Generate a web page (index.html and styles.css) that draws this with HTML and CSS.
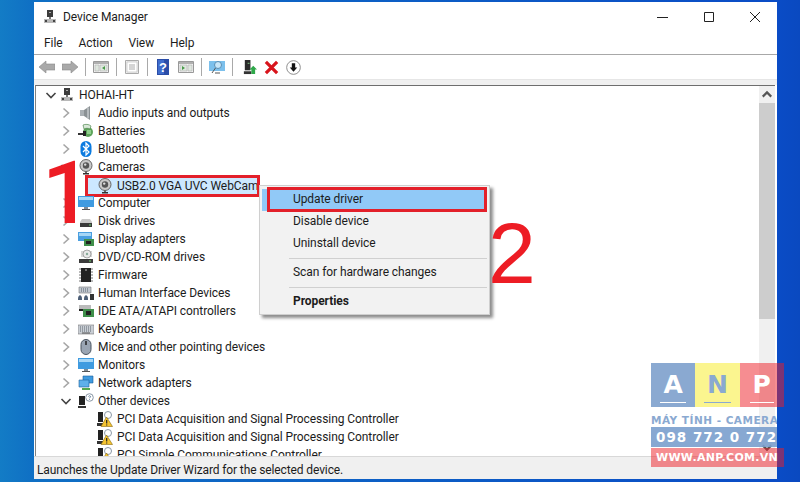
FILE: index.html
```html
<!DOCTYPE html>
<html lang="en">
<head>
<meta charset="utf-8">
<title>Device Manager</title>
<link rel="stylesheet" href="styles.css">
</head>
<body>
<svg class="defs" width="0" height="0" aria-hidden="true">
  <symbol id="chev-r" viewBox="0 0 16 16"><path d="M5.5 3.5 10.5 8 5.5 12.5" fill="none" stroke="#a6a6a6" stroke-width="1.6"/></symbol>
  <symbol id="chev-d" viewBox="0 0 16 16"><path d="M3.5 6 8 10.5 12.5 6" fill="none" stroke="#444" stroke-width="1.6"/></symbol>
  <symbol id="i-pc" viewBox="0 0 16 16"><path d="M5 1h6v7H5z" fill="#3c3c3c"/><path d="M7 3h2v1H7z" fill="#aaa"/><path d="M2 10h12v4H2z" fill="#b8b8b8"/><path d="M3 11h2v2H3zM11 11h2v2h-2z" fill="#444"/><path d="M7 8h2v2H7z" fill="#777"/></symbol>
  <symbol id="i-audio" viewBox="0 0 16 16"><path d="M2 5h4v6H2z" fill="#aab0b4"/><path d="M6 5 12 1v14L6 11z" fill="#8b9194"/><path d="M10 2.5v11" stroke="#c9cdd0" stroke-width="1.4"/></symbol>
  <symbol id="i-batt" viewBox="0 0 16 16"><ellipse cx="10" cy="9" rx="5" ry="5" fill="#5da35a"/><path d="M5 2c2-1 6-1 8 1l-1 3c-2-1-4-1-6 0z" fill="#d9e8d8" stroke="#3d7a3d" stroke-width=".6"/><path d="M0 10h6v2H0z" fill="#333"/><path d="M5 8h3v5H5z" fill="#222"/><path d="M9 7h4v4H9z" fill="#8fd08c"/></symbol>
  <symbol id="i-bt" viewBox="0 0 16 16"><rect x="2.5" y="0" width="11" height="16" rx="5.5" fill="#0b7be0"/><path d="M5 5l6 6-3 3V2l3 3-6 6" fill="none" stroke="#fff" stroke-width="1.2"/></symbol>
  <symbol id="i-cam" viewBox="0 0 16 16"><circle cx="8" cy="6.5" r="6" fill="#c9c9c9" stroke="#666"/><circle cx="8" cy="6.5" r="3.2" fill="#555"/><circle cx="7.2" cy="5.6" r="1.2" fill="#ddd"/><path d="M5 14h6v1.5H5z" fill="#333"/><path d="M7 12h2v2H7z" fill="#666"/></symbol>
  <symbol id="i-mon" viewBox="0 0 16 16"><path d="M0 1h16v11H0z" fill="#3f9be0"/><path d="M1 2h14v3H1z" fill="#a6d6f6"/><path d="M6 12h4v2H6z" fill="#7f8b95"/><path d="M4 14h8v1H4z" fill="#555"/></symbol>
  <symbol id="i-disk" viewBox="0 0 16 16"><path d="M2 9 4 6h8l2 3v4H2z" fill="#c8c8c8"/><path d="M2 10h12v4H2z" fill="#3a3a3a"/><path d="M11 11.500h2v1h-2z" fill="#6fd06f"/></symbol>
  <symbol id="i-disp" viewBox="0 0 16 16"><path d="M0 1h14v9H0z" fill="#4a9fe0"/><path d="M1 2h12v3H1z" fill="#a6d6f6"/><path d="M6 8h10v7H6z" fill="#3f8f4a"/><path d="M8 10h5v3H8z" fill="#222"/></symbol>
  <symbol id="i-dvd" viewBox="0 0 16 16"><path d="M3 8 3 2h11v6z" fill="#d5d5d5"/><circle cx="9" cy="5" r="4" fill="#e8e8e8" stroke="#888" stroke-width=".7"/><circle cx="9" cy="5" r="1.200" fill="#8a9"/><path d="M1 10h14v4H1z" fill="#3a3a3a"/><path d="M11 11.500h2v1h-2z" fill="#6fd06f"/></symbol>
  <symbol id="i-fw" viewBox="0 0 16 16"><path d="M3 1h10v14H3z" fill="#222"/><path d="M1 2h2M1 5h2M1 8h2M1 11h2M1 14h2M13 2h2M13 5h2M13 8h2M13 11h2M13 14h2" stroke="#777" stroke-width="1.200"/><circle cx="8" cy="3" r="1" fill="#888"/></symbol>
  <symbol id="i-hid" viewBox="0 0 16 16"><path d="M1 2h12v6H1z" fill="#c2c8d0" stroke="#777" stroke-width=".6"/><path d="M3 4h8M3 6h8" stroke="#55606a" stroke-dasharray="1 1"/><path d="M0 14c0-5 4-5 4 0v1H0zM6 14c0-5 4-5 4 0v1H6z" fill="#4d5f77"/><path d="M12 9h4v6h-4z" fill="#333"/></symbol>
  <symbol id="i-ide" viewBox="0 0 16 16"><path d="M1 2h12v4H1z" fill="#bbb"/><path d="M1 6h6v2H1z" fill="#222"/><path d="M5 6h11v8H5z" fill="#3f8f4a"/><path d="M8 8h5v4H8z" fill="#222"/></symbol>
  <symbol id="i-kbd" viewBox="0 0 16 16"><path d="M0 4h16v9H0z" fill="#c9ced4" stroke="#777" stroke-width=".6"/><path d="M2 6h12M2 8h12M2 10h12" stroke="#5c6670" stroke-dasharray="1 1"/><path d="M4 12h8" stroke="#555"/></symbol>
  <symbol id="i-mouse" viewBox="0 0 16 16"><rect x="3" y="0.500" width="10" height="15" rx="5" fill="#9aa5b3" stroke="#4a5460"/><path d="M8 2v4" stroke="#222" stroke-width="1.500"/></symbol>
  <symbol id="i-net" viewBox="0 0 16 16"><path d="M5 1h10v7H5z" fill="#3f9be0" stroke="#17609c" stroke-width=".6"/><path d="M1 5h10v7H1z" fill="#5fb0ea" stroke="#17609c" stroke-width=".6"/><path d="M4 13h8v2H4z" fill="#55a84f"/></symbol>
  <symbol id="i-other" viewBox="0 0 16 16"><path d="M1 3h6v9H1z" fill="#222"/><path d="M0 13h8v2H0z" fill="#333"/><circle cx="11.500" cy="4.500" r="3.800" fill="#fff" stroke="#8a97a5"/><path d="M10.500 3.500c.5-1.200 2.200-.8 2 .3-.1.700-1 .7-1 1.500M11.500 6.300v.7" stroke="#5f7d9a" fill="none"/></symbol>
  <symbol id="i-warn" viewBox="0 0 16 16"><path d="M1 1h5v10H1z" fill="#222"/><path d="M0 12h6v3H0z" fill="#333"/><circle cx="11" cy="4" r="3.500" fill="#fff" stroke="#8a97a5"/><path d="M9.500 6 15.500 15.500H4z" fill="#f4c430" stroke="#8a6a10" stroke-width=".6"/><path d="M9.700 9v3.500M9.700 13.500v1" stroke="#222" stroke-width="1.200"/></symbol>
</svg>

<div class="desktop">
  <div class="window">
    <header class="titlebar">
      <svg class="ti"><use href="#i-pc"/></svg>
      <span class="title">Device Manager</span>
      <div class="wctrl">
        <svg width="14" height="14" viewBox="0 0 14 14"><path d="M1 7.500h11" stroke="#222"/></svg>
        <svg width="14" height="14" viewBox="0 0 14 14"><path d="M2.500 2.500h9v9h-9z" fill="none" stroke="#222"/></svg>
        <svg width="14" height="14" viewBox="0 0 14 14"><path d="M2 2l10 10M12 2 2 12" stroke="#222"/></svg>
      </div>
    </header>
    <nav class="menubar"><span>File</span><span>Action</span><span>View</span><span>Help</span></nav>
    <div class="toolbar">
      <svg class="tb" viewBox="0 0 16 16"><path d="M0 8 7 2v3h9v6H7v3z" fill="#a9a9a9" stroke="#8a8a8a" stroke-width=".6"/></svg>
      <svg class="tb" viewBox="0 0 16 16"><path d="M16 8 9 2v3H0v6h9v3z" fill="#a9a9a9" stroke="#8a8a8a" stroke-width=".6"/></svg>
      <i class="sep"></i>
      <svg class="tb" viewBox="0 0 16 16"><path d="M.5 2.500h15v11H.5z" fill="#f2f2f2" stroke="#999"/><path d="M1 3h14v2H1z" fill="#b0b0b0"/><path d="M2 6h4v6H2zM7 6h7v6H7z" fill="#dfe7df" stroke="#a5a5a5" stroke-width=".5"/><path d="M12 7v4L9 9z" fill="#4a9a4a"/></svg>
      <i class="sep"></i>
      <svg class="tb" viewBox="0 0 16 16"><path d="M1.500 1.500h13v13h-13z" fill="#eee" stroke="#aaa"/><path d="M3 3h10v10H3z" fill="#fff" stroke="#bbb" stroke-width=".6"/><path d="M5 6h6M5 8h6M5 10h6" stroke="#aaa"/></svg>
      <i class="sep"></i>
      <svg class="tb" viewBox="0 0 16 16"><path d="M2 0h12v16H2z" fill="#2a4da8"/><path d="M3 1h6v14H3z" fill="#3f6ccc"/><text x="8" y="12.500" class="q">?</text></svg>
      <svg class="tb" viewBox="0 0 16 16"><path d="M.5 2.500h15v11H.5z" fill="#f2f2f2" stroke="#999"/><path d="M1 3h14v2H1z" fill="#b0b0b0"/><path d="M2 6h7v6H2zM10 6h4v6h-4z" fill="#dfe7df" stroke="#a5a5a5" stroke-width=".5"/><path d="M4 7v4l3-2z" fill="#4a9a4a"/></svg>
      <i class="sep"></i>
      <svg class="tb" viewBox="0 0 16 16"><path d="M0 2h16v10H0z" fill="#7cc0ec"/><circle cx="9" cy="6" r="3.500" fill="#c8e6f8" stroke="#5a8fb5"/><path d="M6.500 9 3 14M6 14h5" stroke="#555"/></svg>
      <i class="sep"></i>
      <svg class="tb small gap" viewBox="0 0 16 16"><path d="M3 0h6v11H3z" fill="#2a2a2a"/><path d="M2 12h8v3H2z" fill="#333"/><path d="M6 3h2v1H6z" fill="#8c8"/><path d="M12 6l4 4h-2v5h-4v-5H8z" fill="#2fa84a"/></svg>
      <svg class="tb small" viewBox="0 0 16 16"><path d="M2 2 14 14M14 2 2 14" stroke="#d8141c" stroke-width="3.400"/></svg>
      <svg class="tb small" viewBox="0 0 16 16"><circle cx="8" cy="8" r="7.300" fill="#fff" stroke="#888"/><path d="M6.200 3.500h3.600V8H12l-4 4.500L4 8h2.200z" fill="#111"/></svg>
    </div>
    <div class="strip"></div>
    <div class="pane">
      <div class="tree">
        <div class="row l0"><svg class="chev root"><use href="#chev-d"/></svg><svg class="ico"><use href="#i-pc"/></svg><span>HOHAI-HT</span></div>
        <div class="row l1"><svg class="chev"><use href="#chev-r"/></svg><svg class="ico"><use href="#i-audio"/></svg><span>Audio inputs and outputs</span></div>
        <div class="row l1"><svg class="chev"><use href="#chev-r"/></svg><svg class="ico"><use href="#i-batt"/></svg><span>Batteries</span></div>
        <div class="row l1"><svg class="chev"><use href="#chev-r"/></svg><svg class="ico"><use href="#i-bt"/></svg><span>Bluetooth</span></div>
        <div class="row l1"><svg class="chev"><use href="#chev-d"/></svg><svg class="ico"><use href="#i-cam"/></svg><span>Cameras</span></div>
        <div class="row l2"><div class="sel"><svg class="ico"><use href="#i-cam"/></svg><span>USB2.0 VGA UVC WebCam</span></div></div>
        <div class="row l1"><svg class="chev"><use href="#chev-r"/></svg><svg class="ico"><use href="#i-mon"/></svg><span>Computer</span></div>
        <div class="row l1"><svg class="chev"><use href="#chev-r"/></svg><svg class="ico"><use href="#i-disk"/></svg><span>Disk drives</span></div>
        <div class="row l1"><svg class="chev"><use href="#chev-r"/></svg><svg class="ico"><use href="#i-disp"/></svg><span>Display adapters</span></div>
        <div class="row l1"><svg class="chev"><use href="#chev-r"/></svg><svg class="ico"><use href="#i-dvd"/></svg><span>DVD/CD-ROM drives</span></div>
        <div class="row l1"><svg class="chev"><use href="#chev-r"/></svg><svg class="ico"><use href="#i-fw"/></svg><span>Firmware</span></div>
        <div class="row l1"><svg class="chev"><use href="#chev-r"/></svg><svg class="ico"><use href="#i-hid"/></svg><span>Human Interface Devices</span></div>
        <div class="row l1"><svg class="chev"><use href="#chev-r"/></svg><svg class="ico"><use href="#i-ide"/></svg><span>IDE ATA/ATAPI controllers</span></div>
        <div class="row l1"><svg class="chev"><use href="#chev-r"/></svg><svg class="ico"><use href="#i-kbd"/></svg><span>Keyboards</span></div>
        <div class="row l1"><svg class="chev"><use href="#chev-r"/></svg><svg class="ico"><use href="#i-mouse"/></svg><span>Mice and other pointing devices</span></div>
        <div class="row l1"><svg class="chev"><use href="#chev-r"/></svg><svg class="ico"><use href="#i-mon"/></svg><span>Monitors</span></div>
        <div class="row l1"><svg class="chev"><use href="#chev-r"/></svg><svg class="ico"><use href="#i-net"/></svg><span>Network adapters</span></div>
        <div class="row l1"><svg class="chev"><use href="#chev-d"/></svg><svg class="ico"><use href="#i-other"/></svg><span>Other devices</span></div>
        <div class="row l2"><svg class="ico"><use href="#i-warn"/></svg><span>PCI Data Acquisition and Signal Processing Controller</span></div>
        <div class="row l2"><svg class="ico"><use href="#i-warn"/></svg><span>PCI Data Acquisition and Signal Processing Controller</span></div>
        <div class="row l2"><svg class="ico"><use href="#i-warn"/></svg><span>PCI Simple Communications Controller</span></div>
      </div>
      <div class="scrollbar">
        <svg class="sarrow" viewBox="0 0 15 16"><path d="M3.500 10 7.500 6l4 4" fill="none" stroke="#555" stroke-width="2"/></svg>
        <div class="thumb"></div>
        <div class="track"></div>
        <svg class="sarrow" viewBox="0 0 15 16"><path d="M3.500 6l4 4 4-4" fill="none" stroke="#555" stroke-width="2"/></svg>
      </div>
    </div>
    <footer class="status">Launches the Update Driver Wizard for the selected device.</footer>
  </div>

  <div class="menu">
    <div class="item hl">Update driver<i class="redbox"></i></div>
    <div class="item">Disable device</div>
    <div class="item">Uninstall device</div>
    <hr class="msep">
    <div class="item">Scan for hardware changes</div>
    <hr class="msep">
    <div class="item bold">Properties</div>
  </div>

  <span class="num one">1</span>
  <span class="num two">2</span>

  <div class="logo">
    <div class="tiles">
      <div class="tile ta"><b>A</b></div>
      <div class="tile tn"><b>N</b></div>
      <div class="tile tp"><b>P</b></div>
    </div>
    <div class="tag">MÁY TÍNH - CAMERA</div>
    <div class="band phone">098 772 0 772</div>
    <div class="band web">WWW.ANP.COM.VN</div>
  </div>
</div>
</body>
</html>
```
FILE: styles.css
```css
* { box-sizing: border-box; }
html, body { margin: 0; padding: 0; height: 100%; overflow: hidden; }
body { font-family: Roboto, "Noto Sans", sans-serif; font-size: 12px; color: #1c1c1c; letter-spacing: -.08px; }
.defs { position: absolute; }

.desktop {
  position: relative;
  width: 800px;
  height: 482px;
  padding: 2px 23px 3px 34px;
  overflow: hidden;
  background: linear-gradient(90deg, #137cc6 0, #0f6fc4 34px, #0a4cc6 777px, #0a49c0 800px);
}

.window {
  height: 477px;
  display: flex;
  flex-direction: column;
  background: #fff;
}

.titlebar { height: 30px; display: flex; align-items: center; padding-left: 8px; flex: none; }
.ti { width: 16px; height: 16px; }
.title { margin-left: 5px; }
.wctrl { margin-left: auto; display: flex; gap: 32px; padding-right: 15px; }

.menubar { height: 22px; flex: none; display: flex; gap: 16px; align-items: center; padding-left: 10px; }
.toolbar {
  height: 25px; flex: none;
  display: flex; align-items: center; gap: 7px;
  padding-left: 5px;
  border-top: 1px solid #a8a8a8;
}
.tb { width: 16px; height: 16px; flex: none; }
.tb.small { width: 15px; height: 15px; }
.tb.gap { margin-left: 2px; }
.sep { width: 1px; height: 18px; background: #a9a9a9; flex: none; }
.q { font: bold 13px "Liberation Sans", sans-serif; fill: #fff; text-anchor: middle; }
.strip { height: 6px; flex: none; background: #f0f0f0; border-top: 1px solid #e6e6e6; }

.pane {
  flex: 1; min-height: 0;
  display: flex;
  margin-right: 2px;
  margin-left: 1px;
  border-top: 1px solid #6e6e6e;
  border-left: 1px solid #828282;
  overflow: hidden;
}
.tree { flex: 1; overflow: hidden; }
.row { height: 18px; display: flex; align-items: center; white-space: nowrap; }
.l0 { padding-left: 7px; }
.l1 { padding-left: 22px; }
.l2 { padding-left: 61px; }
.chev { width: 16px; height: 16px; flex: none; margin-right: 4px; }
.chev.root { margin-right: 0; }
.ico { width: 16px; height: 16px; flex: none; margin-right: 4px; }
.sel {
  display: flex; align-items: center;
  align-self: flex-end;
  height: 16px;
  width: 169px;
  margin-left: -9px;
  padding-left: 9px;
  background: #cce8ff;
  outline: 3px solid #e3202a;
}

.scrollbar { width: 16px; flex: none; display: flex; flex-direction: column; background: #f0f0f0; }
.sarrow { width: 16px; height: 17px; flex: none; }
.thumb { height: 216px; background: #cdcdcd; flex: none; }
.track { flex: 1; }

.status {
  height: 23px; flex: none;
  padding: 3px 0 0 3px;
  display: flex; align-items: center;
  background: #f0f0f0;
  border-top: 1px solid #d8d8d8;
  letter-spacing: -.12px;
}

.menu {
  position: absolute;
  left: 259px; top: 185px;
  width: 231px; height: 130px;
  padding: 3px 2px;
  background: #f2f2f2;
  border: 1px solid #cfcfcf;
  box-shadow: 3px 3px 3px rgba(0,0,0,.45);
}
.item { position: relative; height: 22px; line-height: 21px; padding-left: 31px; }
.hl { background: #91c9f7; }
.bold { font-weight: 700; }
.redbox { position: absolute; left: 5px; right: 0; top: -2px; bottom: -1px; border: 3px solid #e3202a; }
.msep { margin: 3px 0 3px 27px; border: 0; border-top: 1px solid #d0d0d0; height: 1px; }

.num {
  position: absolute;
  font-family: "Liberation Sans", sans-serif;
  color: #ed1c24;
  line-height: 1;
  font-size: 86px;
  letter-spacing: 0;
}
.one { left: 42px; top: 149px; font-family: Roboto, sans-serif; font-size: 88px; font-weight: 500; }
.two { left: 488px; top: 210px; }

.logo { position: absolute; left: 651px; top: 363px; width: 133px; font-family: "DejaVu Sans", sans-serif; font-weight: 700; letter-spacing: 0; }
.tiles { display: flex; height: 44px; }
.tile { width: 44.300px; display: flex; align-items: center; justify-content: center; }
.tile b { font-size: 25px; line-height: 34px; border-bottom: 1px solid currentColor; padding: 0 3px; color: #fff; font-weight: 700; }
.ta { background: #8aa9d1; }
.tn { background: #fbf58f; }
.tn b { color: #8aa9d1; }
.tp { background: rgba(237, 28, 36, .5); }
.tag { width: 126px; height: 20px; line-height: 27px; font-size: 10.500px; color: #8aa9d1; white-space: nowrap; overflow: hidden; letter-spacing: .5px; }
.band { color: #fff; white-space: nowrap; padding-left: 5px; overflow: hidden; }
.phone { width: 126px; height: 20px; line-height: 20px; background: rgba(122, 158, 205, .9); font-size: 13.500px; letter-spacing: 1px; }
.web { height: 19px; line-height: 19px; margin-top: 1px; background: rgba(237, 28, 36, .5); font-size: 11px; letter-spacing: .3px; }
```
